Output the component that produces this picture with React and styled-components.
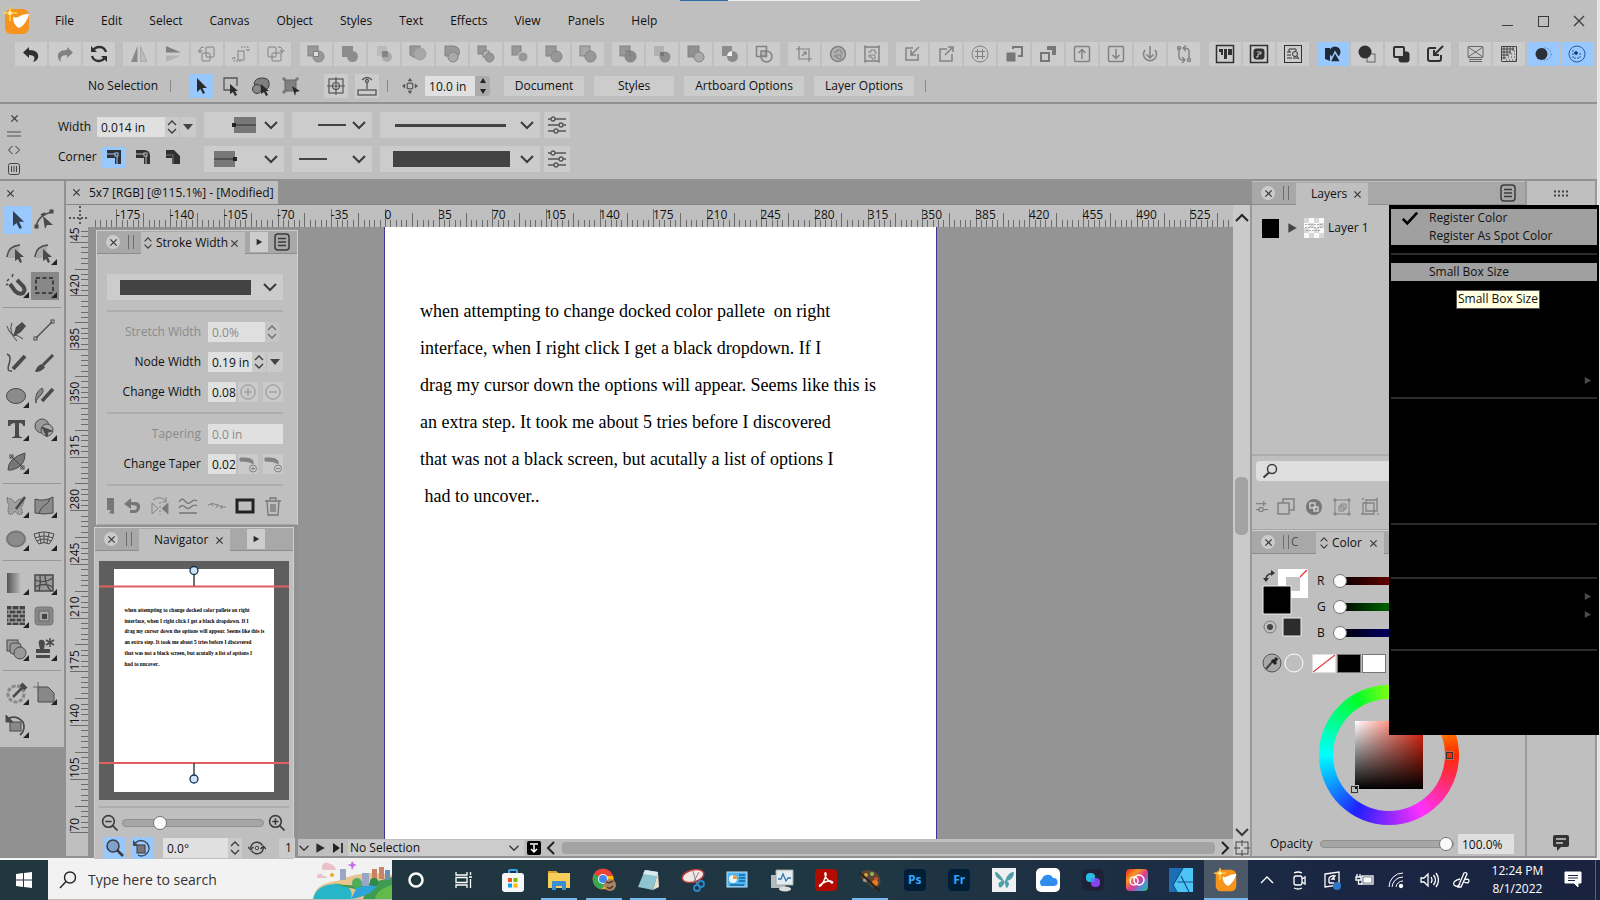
import React from 'react';
import styled, { createGlobalStyle, css } from 'styled-components';

const GlobalStyle = createGlobalStyle`
  * { box-sizing: border-box; }
  body {
    margin: 0;
    background: #bfbfbf;
    color: #111;
    font: 12px/16px "Open Sans", "Noto Sans", sans-serif;
    overflow: hidden;
  }
  button, input, select { font: inherit; color: inherit; border: 0; padding: 0; margin: 0; border-radius: 0; outline: 0; }
  button { background: none; cursor: pointer; white-space: nowrap; }
  svg { display: block; flex: none; overflow: hidden; }
`;

/* ---------- shared pieces ---------- */

const Svg = styled.svg.attrs({ fill: 'none', 'aria-hidden': true })`
  width: ${p => p.$w || 20}px;
  height: ${p => p.$h || p.$w || 20}px;
  stroke-width: ${p => p.$sw || 1};
`;

const Icon = ({ size = 20, box = 20, children, color = '#3b3b3b', sw }) => (
  <Svg $w={ size } $sw={ sw } viewBox={ `0 0 ${box} ${box}` } stroke={ color } color={ color }>{ children }</Svg>
);

const Close = () => <Icon size={ 9 } box={ 10 } sw={ 1.4 }><path d="M1.5 1.5l7 7M8.5 1.5l-7 7" /></Icon>;
const Chevron = ({ size = 16 }) => <Icon size={ size } box={ 16 } sw={ 2 }><path d="M2 5l6 6 6-6" /></Icon>;
const UpDown = ({ size = 14 }) => <Icon size={ size } box={ 14 } sw={ 1.3 }><path d="M3 5l4-4 4 4M3 9l4 4 4-4" /></Icon>;
const ListIcon = () => (
  <Icon size={ 18 } box={ 18 } sw={ 1.5 }>
    <rect x="2" y="1" width="14" height="16" rx="3" /><path d="M5 5.500h8M5 9h8M5 12.500h8" />
  </Icon>
);

const Window = styled.div`
  display: flex;
  flex-direction: column;
  flex: 1;
  min-height: 0;
  background: #bfbfbf;
  border-right: 3px solid #e6e6e6;
  border-bottom: 2px solid #f4f4f4;
`;

const Page = styled.div`
  display: flex;
  flex-direction: column;
  height: 100vh;
`;

/* ---------- menu bar ---------- */

const MenuBar = styled.header`
  display: flex;
  align-items: center;
  height: 42px;
  padding: 0 10px 0 3px;
  background: linear-gradient(90deg, #2d6ca8 48px, #efefef 48px) 680px 0 / 240px 1px no-repeat;
`;

const Menus = styled.nav`
  display: flex;
  flex: 1;
  gap: 27px;
  padding-left: 24px;
`;

const MenuButton = styled.button`
  height: 24px;
`;

const WindowButtons = styled.div`
  display: flex;
  gap: 20px;
`;

const Logo = ({ size = 28 }) => (
  <Svg $w={ size } viewBox="0 0 28 28">
    <rect x="2" y="2" width="24" height="25" rx="6" fill="#f7941e" />
    <path d="M10 10c6 2 8-4 16-3-1 5-5 12-10 14-4-2-6-6-6-11z" fill="#fff" />
    <path d="M7 0v14M0 6h14" stroke="#ffd34d" strokeWidth="1.5" />
    <circle cx="7" cy="6" r="2" fill="#fff2b0" />
  </Svg>
);

/* ---------- icon toolbar ---------- */

const Toolbar = styled.div`
  display: flex;
  justify-content: space-between;
  height: 24px;
  padding: 0 4px 0 15px;
`;

const ToolGroup = styled.div`
  display: flex;
  gap: 2px;
`;

const ToolbarButton = styled.button`
  display: flex;
  align-items: center;
  justify-content: center;
  width: 32px;
  height: 24px;
  background: ${p => p.$on ? '#99c8ff' : '#cccccc'};
`;

const G = '#828282';
const F = '#989898';
const D = '#303030';

const sq = (x, y, s, fill = F, extra) => <rect x={ x } y={ y } width={ s } height={ s } fill={ fill } { ...extra } />;
const ci = (x, y, r, fill = F, extra) => <circle cx={ x } cy={ y } r={ r } fill={ fill } { ...extra } />;

const toolbarGroups = [
  [
    <path d="M8 3v3c7 0 10 3 9 8-1 2-2 3-5 4 2-3 3-7-4-7v3L2 8.500z" fill={ D } stroke="none" />,
    <path d="M12 3v3c-7 0-10 3-9 8 1 2 2 3 3 4-1-4 0-7 6-7v3l6-5.500z" fill={ G } stroke="none" />,
    <><path d="M17 8a7 7 0 0 0-13-1M3 12a7 7 0 0 0 13 1" stroke={ D } strokeWidth="2.400" /><path d="M2 2v6h6zM18 18v-6h-6z" fill={ D } stroke="none" /></>
  ],
  [
    <g stroke={ G }><path d="M8.500 2v16H2z" fill="#888" stroke="none" /><path d="M11.500 2.500v15H18z" fill="#bbb" stroke="#aaa" /></g>,
    <g stroke={ G }><path d="M3 2v6.500h15z" fill="#808080" stroke="none" /><path d="M3 18v-6.500h15z" fill="#b4b4b4" stroke="none" /></g>,
    <g stroke={ G }><rect x="9" y="3" width="8" height="10" rx="1" /><rect x="5" y="9" width="8" height="8" rx="1" /><path d="M3 8V5q0-2 4-2M1 6l2 3 2-3" /></g>,
    <g stroke={ G }><rect x="7" y="7" width="6" height="9" /><path d="M10 3h7v4M3 13v4h7M15 5l2 2 2-2M1 15l2-2 2 2" strokeDasharray="2 1" /></g>,
    <g stroke={ G }><rect x="3" y="3" width="8" height="10" rx="1" /><rect x="7" y="9" width="9" height="8" rx="1" /><path d="M17 8V5q0-2-4-2M15 6l2 3 2-3" /></g>
  ],
  [
    <g stroke={ G }>{ sq(2, 2, 10) }{ ci(12.5, 12.5, 5.5, F) }<rect x="7.500" y="7.500" width="5" height="5" fill="#ddd" /></g>,
    <g stroke="none">{ sq(2, 2, 11, '#8c8c8c') }{ ci(12.5, 12.5, 5.5, '#8c8c8c') }</g>,
    <g stroke="none">{ sq(3, 2, 10, '#bababa') }{ ci(13, 13, 5, '#aaa') }{ sq(8, 7, 6, '#858585') }</g>,
    <g stroke={ G }><path d="M2 2h10v3L7 14 2 11z" fill={ F } />{ ci(12, 10, 6, '#a8a8a8', { stroke: '#a0a0a0' }) }</g>,
    <g stroke={ G }><path d="M3 2h9q7 1 5 9l-5 1H3z" fill={ F } />{ ci(11, 13, 5, '#aaa') }</g>,
    <g stroke={ G }>{ sq(2, 2, 8) }{ sq(7, 7, 6, '#b5b5b5') }{ ci(13.5, 13.5, 4.5) }</g>,
    <g stroke={ G }>{ sq(2, 2, 9) }{ ci(13, 13, 5, F, { stroke: '#ccc' }) }</g>,
    <g stroke={ G }>{ sq(2, 2, 10) }{ ci(12.5, 12.5, 5.5, F) }</g>,
    <g stroke={ G }>{ sq(2, 2, 10, '#a8a8a8') }{ ci(12.5, 12.5, 5.5, F) }</g>
  ],
  [
    <g stroke={ G }>{ sq(2, 2, 10) }{ ci(12.5, 12.5, 5.5, '#8a8a8a') }<path d="M7 7h5v5" stroke="#777" /></g>,
    <g stroke="none">{ sq(2, 2, 10, '#b2b2b2') }{ ci(13, 13, 5.5, '#8e8e8e') }{ sq(8, 8, 4, '#777') }</g>,
    <g stroke={ G }>{ sq(2, 2, 11, '#909090') }{ ci(13, 13, 5, '#aaa') }</g>,
    <g stroke="none">{ sq(2, 2, 10, '#8c8c8c') }{ ci(12.5, 12.5, 5.5, '#8c8c8c') }<path d="M7 12a6 6 0 0 1 5-5v5z" fill="#f2f2f2" /></g>,
    <g stroke={ G } strokeWidth="1.500">{ sq(2.5, 2.5, 10, 'none') }{ ci(12.5, 12.5, 5.5, 'none') }<path d="M7 7h5v5H7z" fill="#b4b4b4" /></g>
  ],
  [
    <g stroke={ G } strokeWidth="1.200"><path d="M5 2v13h13M2 5h13v13" /><path d="M8 12l4-4M12 11V8H9" /></g>,
    <g stroke={ G }><circle cx="10" cy="10" r="7.500" fill="#b0b0b0" strokeWidth="1.500" /><path d="M6 8h3v-2h4v3h2M7 13h3v2h3v-4H7z" /></g>,
    <g stroke={ G }><rect x="3" y="3" width="14" height="14" strokeWidth="1.500" /><path d="M6 8h3v-2h4v3h2M7 13h3v2h3v-4H7z" /><path d="M2 2h2v2M18 2h-2v2M2 18h2v-2M18 18h-2v-2" /></g>
  ],
  [
    <g stroke={ G } strokeWidth="1.500"><path d="M11 4H4v12h12v-6" /><path d="M17 3l-8 8M9 6v5h5" /></g>,
    <g stroke={ G } strokeWidth="1.500"><path d="M11 5H4v12h12v-7" /><path d="M9 11l8-8M12 3h5v5" /></g>,
    <g stroke={ G }><circle cx="10" cy="10" r="8" /><path d="M5 7.500h10M5 12.500h10M7.500 5v10M12.500 5v10" /></g>,
    <g stroke="#777">{ sq(3, 9, 8, '#777') }<path d="M9 5V3h9v9h-4" strokeWidth="2" /></g>,
    <g stroke="#777"><path d="M4 9h7v8H3V9z" strokeWidth="2" /><path d="M9 2h9v9h-4V6H9z" fill="#777" stroke="none" /></g>,
    <g stroke={ G } strokeWidth="1.500"><rect x="2.500" y="2.500" width="15" height="15" rx="1" /><path d="M10 15V6M6.500 9L10 5.500 13.500 9" /></g>,
    <g stroke={ G } strokeWidth="1.500"><rect x="2.500" y="2.500" width="15" height="15" rx="1" /><path d="M10 5v9M6.500 11l3.500 3.500 3.500-3.500" /></g>,
    <g stroke={ G } strokeWidth="1.500"><path d="M5 6a6.500 6.500 0 1 0 10 0M10 2v12M6.500 10.500L10 14l3.500-3.500" /></g>,
    <g stroke={ G } strokeWidth="1.400"><path d="M5 4v9q0 3 5 3M15 15V7q0-3-5-3M12 1.500L9 4l3 3M8 13l3 3-3 3" /><circle cx="5" cy="4" r="1.500" /><circle cx="15" cy="16" r="1.500" /></g>
  ],
  [
    <g stroke={ D }><rect x="1.500" y="1.500" width="17" height="17" strokeWidth="1.500" /><path d="M4 5h4v6H6V8H4zM9 5h3v10H9zM13 5h4v6h-4z" fill={ D } stroke="none" /></g>,
    <g stroke={ D }><rect x="1.500" y="1.500" width="17" height="17" strokeWidth="1.500" /><rect x="5" y="5" width="10" height="10" rx="2" fill={ D } /><path d="M8 8h4v2H9v3H7" stroke="#ccc" /></g>,
    <g stroke={ D }><rect x="1.500" y="1.500" width="17" height="17" /><path d="M6 5h7v2M4 8h4M4 11h4M4 14h5M6 5v3M10 14h5" /><circle cx="12" cy="10" r="2.500" /><path d="M14 12l2 3" /></g>
  ],
  [
    <g stroke="none" fill="#1f2a38"><path d="M2 4h5v13l-5-2z" /><circle cx="12" cy="8" r="5.500" /><path d="M12 8l6 10H7z" stroke="#99c8ff" strokeWidth="1.500" /></g>,
    <g stroke="#666"><rect x="10" y="10" width="8" height="8" /><circle cx="8" cy="8" r="6.500" fill={ D } stroke="none" /></g>,
    <g stroke={ D }><rect x="8" y="8" width="10" height="10" rx="2" fill={ D } /><rect x="3" y="3" width="10" height="10" rx="1" fill="#ccc" strokeWidth="2" /></g>,
    <g stroke={ D } strokeWidth="2"><path d="M11 4H5q-2 0-2 2v9q0 2 2 2h9q2 0 2-2v-4" /><path d="M18 2l-8 8M9 6v5h5" /></g>
  ],
  [
    <g stroke="#666"><rect x="3" y="2.500" width="15" height="11" rx="1" /><path d="M3 3l15 10M18 3L3 13M4 15.500h13M4 17.500h13" /></g>,
    <g stroke="#444"><path d="M2.500 17V2.500H17.500V17.500H2.500M5 2v13M8 2v10M11 2v8M14 2v5M2 5h13M2 8h10M2 11h8M2 14h5" /><path d="M9 13h9M7 16h11M12 10h6M15 7h3" strokeDasharray="1 2" /></g>,
    <g stroke="#4a78a8"><circle cx="12" cy="10" r="6" strokeDasharray="1.500 1.500" /><circle cx="8.500" cy="10" r="6" fill="#2a2f38" stroke="none" /></g>,
    <g stroke="#2c5c98"><circle cx="10" cy="10" r="8" /><path d="M6 6v8h7V8" strokeDasharray="2 1" /><circle cx="9" cy="9" r="1.500" fill="#124" /></g>
  ]
];

/* ---------- context bar ---------- */

const ContextBar = styled.div`
  display: flex;
  align-items: center;
  height: 38px;
  padding: 4px 0 0 88px;
  border-bottom: 2px solid #919191;
`;

const Tick = styled.i`
  width: 1px;
  height: 12px;
  margin: 0 ${p => p.$space}px;
  background: #888;
`;

const ModeSpacer = styled.i`
  width: ${p => p.$w}px;
`;

const ModeButton = styled.button`
  display: flex;
  align-items: center;
  justify-content: center;
  width: 24px;
  height: 24px;
  margin-right: ${p => p.$raised ? 7 : 6}px;
  background: ${p => p.$on ? '#99c8ff' : p.$raised ? '#cccccc' : 'none'};
`;

const NudgeIcon = styled.span`
  padding: 0 7px 0 13px;
`;

const PushButtons = styled.div`
  display: flex;
  padding-left: 14px;
`;

const Field = styled.input`
  width: ${p => p.$w}px;
  height: 20px;
  padding-left: 4px;
  background: #e0e0e0;
  color: ${p => p.disabled ? '#8a8a8a' : '#111'};
`;

const Stepper = styled.button`
  display: flex;
  align-items: center;
  justify-content: center;
  width: ${p => p.$w || 14}px;
  height: 20px;
  background: ${p => p.$dark ? '#ababab' : '#cacaca'};
  border-radius: ${p => p.$dark ? '0 3px 3px 0' : '0'};
  margin-left: ${p => p.$gap || 0}px;
  opacity: ${p => p.disabled ? 0.6 : 1};
`;

const PushButton = styled.button`
  height: 20px;
  min-width: ${p => p.$w}px;
  margin-right: 10px;
  background: #cccccc;
`;

/* ---------- stroke bar ---------- */

const StrokeBar = styled.section`
  display: flex;
  height: 77px;
  padding: 8px 0 0 7px;
  border-bottom: 2px solid #919191;
`;

const Grip = styled.div`
  display: flex;
  flex-direction: column;
  align-items: center;
  gap: 8px;
  width: 14px;
  padding-top: 2px;
  margin-right: 37px;
`;

const StrokeColumn = styled.div`
  display: flex;
  flex-direction: column;
  gap: 8px;
  margin-right: 8px;
`;

const StrokeFields = styled(StrokeColumn)`
  gap: 4px;
  padding-top: 2px;
`;

const StrokeRow = styled.div`
  display: flex;
  align-items: center;
  height: 26px;
`;

const StrokeLabel = styled.label`
  width: 39px;
`;

const CornerLabel = styled.span`
  width: 43px;
`;

const ComboBox = styled.div`
  display: grid;
  align-items: center;
  width: ${p => p.$w}px;
  height: 26px;
  background: #cccccc;
  > * { grid-area: 1 / 1; }
`;

const ComboSelect = styled.select`
  appearance: none;
  width: 100%;
  height: 100%;
  background: none;
`;

const ComboFace = styled.span`
  display: flex;
  align-items: center;
  justify-content: space-between;
  padding: 0 5px 0 ${p => p.$pad}px;
  pointer-events: none;
`;

const Combo = ({ width, pad, label, children }) => (
  <ComboBox $w={ width }>
    <ComboSelect aria-label={ label }><option /></ComboSelect>
    <ComboFace $pad={ pad }>{ children }<Chevron /></ComboFace>
  </ComboBox>
);

const Bar = styled.i`
  width: ${p => p.$w}px;
  height: ${p => p.$h}px;
  background: #434343;
`;

const Sliders = () => (
  <Icon sw={ 1.3 } color="#555"><path d="M1 4h18M1 10h18M1 16h18" />
    <g fill="#ccc"><circle cx="6" cy="4" r="2" /><circle cx="14" cy="10" r="2" /><circle cx="9" cy="16" r="2" /></g>
  </Icon>
);

const SquareButton = styled.button`
  display: flex;
  align-items: center;
  justify-content: center;
  width: ${p => p.$w || 26}px;
  height: ${p => p.$h || 26}px;
  background: ${p => p.$on ? '#99c8ff' : p.$flat ? 'none' : '#cccccc'};
  margin-left: ${p => p.$gap || 0}px;
`;

/* ---------- workspace ---------- */

const Workspace = styled.main`
  position: relative;
  display: flex;
  flex: 1;
  min-height: 0;
  background: #919191;
  border-bottom: 2px solid #919191;
`;

const Toolbox = styled.aside`
  align-self: flex-start;
  width: 64px;
  padding: 8px 3px 0;
  margin-right: 2px;
  background: #bfbfbf;
`;

const ToolboxClose = styled.button`
  display: flex;
  padding: 0 3px;
`;

const ToolGrid = styled.div`
  display: grid;
  grid-template-columns: 28px 28px;
  gap: 5px 0;
  padding: 8px 0 7px;
  border-bottom: ${p => p.$last ? 0 : 1}px solid #999;
`;

const ToolCell = styled.button`
  display: flex;
  align-items: center;
  justify-content: center;
  height: 28px;
  background: ${p => p.$on ? '#99c8ff' : p.$held ? '#888888' : 'none'};
`;

const T = '#4a4a4a';
const M = '#8b8b8b';
const corner = <path d="M25 19v6h-6z" fill="#222" stroke="none" />;

const arcPointer = (
  <>
    <path d="M3 18Q4 5 16 5l-3 13z" fill="#aaa" stroke="none" />
    <path d="M3 17Q4 6 16 5" strokeWidth="1.500" />
    <path d="M11 9v12l3-2 2 4 2-1-2-5h4z" fill={ T } stroke="none" />
  </>
);

const toolGroups = [
  [
    { on: true, icon: <path d="M9 4v15l3.500-3 3 6 2.500-1.200-3-6h5z" fill="#33414f" stroke="none" /> },
    { icon: <><path d="M4 20Q6 8 20 5M9 8l4-2" strokeWidth="1.500" /><path d="M11 9l10 9-6 0-2 4z" fill={ T } stroke="none" /><rect x="3" y="18" width="3" height="3" fill={ T } /><rect x="18" y="3" width="3" height="3" fill={ T } /></> },
    { icon: arcPointer },
    { icon: <>{ arcPointer }{ corner }</> },
    { icon: <><path d="M6 11l5 7q4 4 8 2 3-3 0-7l-6-6" strokeWidth="4" /><path d="M3 8l2-2M8 4l1-3M2 12l2-1" strokeWidth="1.500" />{ corner }</> },
    { held: true, icon: <><rect x="4" y="5" width="17" height="15" strokeDasharray="4 2.500" strokeWidth="2" stroke="#3f3f3f" />{ corner }</> }
  ],
  [
    { icon: <><path d="M9 20l3-10 6-5 4 4-5 6z" fill={ T } stroke="none" /><path d="M3 9q3 9 7 9t9 4M8 6q-4 9 5 18M12 17l5-6" /></> },
    { icon: <><path d="M4 21L20 5" strokeWidth="1.300" /><rect x="2" y="20" width="3" height="3" /><rect x="19" y="3" width="3" height="3" /></> },
    { icon: <><path d="M9 19L21 6" strokeWidth="4" /><path d="M3 4q5 2 2 10t3 7" strokeWidth="1.500" /></> },
    { icon: <><path d="M11 15L21 5" strokeWidth="3" /><path d="M3 22q2-7 7-8l3 3q-3 5-10 5z" fill={ T } stroke="none" /></> },
    { icon: <><ellipse cx="12" cy="13" rx="9.500" ry="7.500" fill={ M } />{ corner }</> },
    { icon: <><path d="M10 18L21 6" strokeWidth="3.500" /><path d="M4 20Q2 10 10 5q3 3-2 8t-4 7z" fill="#888" /></> },
    { icon: <><path d="M4 4h17v6h-2q0-3-4-3v12q0 2 3 2v1H8v-1q3 0 3-2V7Q7 7 6 10H4z" fill={ T } stroke="none" />{ corner }</> },
    { icon: <><circle cx="10" cy="10" r="7" fill="#999" /><circle cx="15" cy="14" r="6" fill="#aaa" /><path d="M10 11l10 4-4 1-1 5z" fill={ T } />{ corner }</> },
    { icon: <><path d="M4 21Q4 9 21 4q1 13-13 17z" fill="#777" /><path d="M7 7l12 12" /><rect x="6" y="6" width="3" height="3" /><rect x="17" y="17" width="3" height="3" />{ corner }</> }
  ],
  [
    { icon: <><path d="M3 5q5 0 8 5 3-5 9-4 0 6-3 8 2 4 1 7-4 2-7-3-3 5-6 3-2-3 0-8-2-4-2-8z" fill="#a0a0a0" strokeDasharray="1 1" /><path d="M12 16L21 4" strokeWidth="2.500" />{ corner }</> },
    { icon: <><path d="M3 6q9 3 18-2v16q-8 2-18 0z" fill={ M } /><path d="M7 20q2-6 6-8t5-7" />{ corner }</> },
    { icon: <><ellipse cx="12" cy="13" rx="9" ry="7.500" fill={ M } stroke="#777" strokeWidth="2" />{ corner }</> },
    { icon: <><path d="M2 8q10-4 20 0-1 6-5 10-5-3-10 0Q3 14 2 8zM3 12q9-4 18 0M5 15q7-4 14 0M12 6v11M7 7l2 10M17 7l-2 10" />{ corner }</> }
  ],
  [
    { icon: <><defs><linearGradient id="grad"><stop stopColor="#555" /><stop offset="1" stopColor="#b5b5b5" /></linearGradient></defs><rect x="3" y="3" width="13" height="20" fill="url(#grad)" stroke="none" />{ corner }</> },
    { icon: <><rect x="3" y="5" width="18" height="16" fill="#999" strokeWidth="1.500" /><path d="M3 10q9 4 18-2M3 17q9-5 18 0M8 5q1 8-1 16M13 5q0 10 6 16" strokeWidth="1.300" />{ corner }</> },
    { icon: <><rect x="3" y="3" width="18" height="19" fill="#444" stroke="none" /><path d="M3 7h18M3 11h18M3 15h18M3 19h18M8 3v4M15 3v4M5 7v4M12 7v4M18 7v4M8 11v4M15 11v4M5 15v4M12 15v4M18 15v4M8 19v3M15 19v3" stroke="#bbb" />{ corner }</> },
    { icon: <><rect x="3" y="4" width="18" height="18" rx="3" fill="#888" stroke="#777" /><rect x="7" y="8" width="10" height="10" fill="#a5a5a5" stroke="#666" /><rect x="10" y="11" width="5" height="5" fill="#444" stroke="none" /></> },
    { icon: <><rect x="3" y="4" width="11" height="11" fill="#999" /><rect x="6" y="7" width="11" height="11" rx="3" fill="#999" /><circle cx="16" cy="17" r="6" fill="#999" />{ corner }</> },
    { icon: <><path d="M8 4q4-1 5 3l-1 6h6v4H4v-4h4L7 9q-1-4 1-5zM4 19h14v3H4z" fill={ T } stroke="none" /><path d="M18 2v9M14 4l8 5M22 4l-8 5" strokeWidth="1.500" />{ corner }</> }
  ],
  [
    { icon: <><circle cx="12" cy="14" r="8" strokeWidth="3" stroke="#888" strokeDasharray="4 1.500" /><path d="M9 17L19 7" strokeWidth="2.500" /><path d="M17 4l5 5" strokeWidth="4" />{ corner }</> },
    { icon: <><path d="M6 7h10l6 6v9H6z" fill="#888" /><path d="M1 7h8M6 2v8" stroke="#666" />{ corner }</> },
    { icon: <><rect x="6" y="9" width="11" height="9" fill="#888" /><path d="M3 6q9-5 16 3 3 8-3 13" strokeWidth="1.700" /><path d="M2 2v7h7z" fill={ T } />{ corner }</> }
  ]
];

const DocumentArea = styled.section`
  display: flex;
  flex-direction: column;
  flex: 1;
  min-width: 0;
`;

const DocumentTabs = styled.div`
  display: flex;
  height: 24px;
  border-bottom: 1px solid #858585;
`;

const DocumentTab = styled.button`
  display: flex;
  align-items: center;
  gap: 8px;
  height: 23px;
  padding: 0 4px 0 6px;
  background: #bfbfbf;
`;

const RulerRow = styled.div`
  display: flex;
  height: 22px;
  background: #bfbfbf;
`;

const TopRuler = styled.svg`
  flex: 1;
  min-width: 0;
  height: 22px;
  font-size: 12px;
`;

const SideRuler = styled.svg`
  width: 22px;
  height: 100%;
  background: #bfbfbf;
  font-size: 12px;
`;

const DocumentBody = styled.div`
  display: flex;
  flex: 1;
  min-height: 0;
`;

const DocumentMain = styled.div`
  display: flex;
  flex-direction: column;
  flex: 1;
  min-width: 0;
`;

const PanelColumn = styled.div`
  display: flex;
  flex-direction: column;
  gap: 2px;
  width: 210px;
  padding: 3px 0 0 6px;
`;

const CanvasColumn = styled.div`
  display: flex;
  flex-direction: column;
  flex: 1;
  min-width: 0;
`;

const Canvas = styled.div`
  flex: 1;
  min-height: 0;
  padding-left: 86px;
  background: #949494;
`;

const Artboard = styled.article`
  width: 553px;
  height: 100%;
  padding: 66px 0 0 35px;
  background: #fff;
  border-left: 1px solid #3b3796;
  border-right: 1px solid #3b3796;
  font: 18px/37px "Liberation Serif", serif;
  color: #000;
  white-space: pre;
`;

const Line = styled.p`
  margin: 0;
`;

const lines = [
  'when attempting to change docked color pallete  on right',
  'interface, when I right click I get a black dropdown. If I',
  'drag my cursor down the options will appear. Seems like this is',
  'an extra step. It took me about 5 tries before I discovered',
  'that was not a black screen, but acutally a list of options I',
  ' had to uncover..'
];

const StatusBar = styled.footer`
  display: flex;
  align-items: center;
  gap: 2px;
  height: 17px;
  background: #bfbfbf;
`;

const StatusSelect = styled.select`
  appearance: none;
  flex: 1;
  height: 16px;
  padding-left: 2px;
  background: none;
`;

const StatusCombo = styled.div`
  display: flex;
  align-items: center;
  width: 176px;
  padding-right: 4px;
  background: #cccccc;
`;

const StatusButton = styled.button`
  display: flex;
  justify-content: center;
  width: 16px;
`;

const HorizontalThumb = styled.i`
  flex: 1;
  height: 12px;
  border-radius: 4px;
  background: #a3a3a3;
`;

const ScrollColumn = styled.div`
  display: flex;
  flex-direction: column;
  align-items: center;
  width: 19px;
  padding: 5px 0 0;
  background: #cacaca;
  border-right: 2px solid #999;
`;

const VerticalTrack = styled.div`
  flex: 1;
  padding-top: 251px;
`;

const VerticalThumb = styled.i`
  display: block;
  width: 13px;
  height: 58px;
  border-radius: 5px;
  background: #a3a3a3;
`;

/* ---------- docked panels ---------- */

const Spacer = styled.i`
  flex: 1;
`;

const Panel = styled.section`
  display: flex;
  flex-direction: column;
  background: #bfbfbf;
  margin-left: ${p => p.$inset || 0}px;
  margin-right: ${p => p.$end || 0}px;
  border: solid #cfcfcf;
  border-width: 1px 1px 0 1px;
`;

const PanelTabs = styled.header`
  display: flex;
  align-items: center;
  height: 23px;
  padding: 0 ${p => p.$end || 0}px 0 9px;
  background: #a8a8a8;
  border-bottom: 1px solid #8e8e8e;
`;

const PanelClose = styled.button`
  display: flex;
  align-items: center;
  justify-content: center;
  width: 14px;
  height: 14px;
  border-radius: 7px;
  background: #cbcbcb;
`;

const PanelGrip = styled.i`
  width: 6px;
  height: 14px;
  margin: 0 7px 0 8px;
  border: solid #6c6c6c;
  border-width: 0 1px;
`;

const ColorGrip = styled(PanelGrip)`
  margin-right: 2px;
`;

const PanelTab = styled.button`
  display: flex;
  align-items: center;
  align-self: stretch;
  gap: 2px;
  margin: 1px 0 -1px;
  width: ${p => p.$w}px;
  padding: 0 6px 0 ${p => p.$pad || 2}px;
  background: #bfbfbf;
  svg:last-child { margin-left: auto; }
`;

const HiddenTab = styled.span`
  width: 25px;
  color: #555;
`;

const NextTab = styled.button`
  display: flex;
  align-items: center;
  justify-content: center;
  width: 18px;
  height: 20px;
  background: #cdcdcd;
`;

const Arrow = ({ color = '#2b2b2b', size = 10 }) => (
  <Icon size={ size } box={ 10 }><path d="M2 1l7 4-7 4z" fill={ color } stroke="none" /></Icon>
);

const Down = () => <Icon size={ 10 } box={ 10 }><path d="M0 2h10L5 8z" fill="#444" stroke="none" /></Icon>;

const PanelBody = styled.div`
  display: flex;
  flex-direction: column;
  gap: ${p => p.$gap || 0}px;
  padding: ${p => p.$pad};
`;

const Rule = styled.hr`
  width: 100%;
  height: 2px;
  margin: 0;
  border: 0;
  background: #acacac;
`;

const FormRow = styled.div`
  display: flex;
  align-items: center;
  height: 20px;
  label {
    width: 94px;
    margin-right: 7px;
    text-align: right;
    color: ${p => p.$off ? '#8a8a8a' : '#111'};
  }
`;

const IconRow = styled.div`
  display: flex;
  align-items: center;
  justify-content: space-between;
`;

const Foot = styled.i`
  height: 9px;
  border-bottom: 1px solid #a5a5a5;
`;

const Preview = styled.div`
  height: 239px;
  background: #5e5e5e;
`;

const Range = styled.input.attrs({ type: 'range' })`
  appearance: none;
  flex: 1;
  min-width: 0;
  height: 14px;
  background: none;
  &::-webkit-slider-runnable-track {
    height: 8px;
    border-radius: ${p => p.$tint ? 0 : 4}px;
    border: ${p => p.$tint ? '0' : '1px solid #8f8f8f'};
    background: ${p => p.$tint ? `linear-gradient(90deg, transparent 5px, #000 5px, ${p.$tint} 75%)` : '#a6a6a6'};
  }
  &::-webkit-slider-thumb {
    appearance: none;
    width: 14px;
    height: 14px;
    margin-top: ${p => p.$tint ? -3 : -4}px;
    border: 1px solid #777;
    border-radius: 7px;
    background: #fafafa;
  }
`;

const ZoomRange = styled(Range)`
  margin: 0 4px;
`;

const ZoomRow = styled(IconRow)`
  padding: 0 4px 0 2px;
`;

const NavFooter = styled.div`
  display: flex;
  align-items: center;
  height: 22px;
  margin-right: -6px;
`;

const AngleField = styled(Field)`
  margin-left: 10px;
`;

const PageNumber = styled.span`
  width: 16px;
  height: 20px;
  margin-left: auto;
  padding: 2px 0 0 6px;
  background: #cacaca;
`;

const Dock = styled.aside`
  display: flex;
  flex-direction: column;
  width: 275px;
  padding-top: 1px;
  background: #bfbfbf;
  border-right: 2px solid #999;
`;

const LayerList = styled.div`
  flex: 1;
  min-height: 0;
  padding: 13px 10px;
`;

const LayerRow = styled.div`
  display: flex;
  align-items: center;
  height: 20px;
`;

const LayerName = styled.span`
  display: flex;
  align-items: center;
  gap: 4px;
  padding-left: 6px;
`;

const Swatch = styled.button`
  width: ${p => p.$w}px;
  height: ${p => p.$h}px;
  border: ${p => p.$border || '0'};
  background: ${p => p.$fill};
  margin-right: ${p => p.$gap || 0}px;
`;

const Search = styled.label`
  display: flex;
  align-items: center;
  height: 20px;
  margin: 5px 4px 0;
  padding-left: 6px;
  border-radius: 4px;
  background: #dedede;
  input { flex: 1; background: none; }
`;

const LayerActions = styled.div`
  display: flex;
  align-items: center;
  gap: 8px;
  height: 48px;
  padding: 4px 0 0 4px;
`;

const Divider = styled.i`
  height: 2px;
  background: #cfcfcf;
  border-top: 1px solid #a5a5a5;
`;

const ColorMixer = styled.div`
  display: flex;
  gap: 9px;
  padding: 15px 10px 0;
`;

const Channels = styled.div`
  display: flex;
  flex-direction: column;
  flex: 1;
  gap: 6px;
  padding-top: 2px;
`;

const Channel = styled.label`
  display: flex;
  align-items: center;
  height: 20px;
  span { width: 16px; }
`;

const SwatchRow = styled.div`
  display: flex;
  align-items: center;
  padding: 10px 10px 12px;
`;

const Wheel = styled.div`
  position: relative;
  display: flex;
  align-items: center;
  justify-content: center;
  align-self: center;
  width: 140px;
  height: 140px;
  border-radius: 70px;
  background: conic-gradient(from 90deg, #ff2a00, #ff30ff, #1f20ff, #00ffff, #00ff2a, #ffff00, #ff2a00);
`;

const WheelHole = styled.div`
  display: flex;
  align-items: center;
  justify-content: center;
  width: 112px;
  height: 112px;
  border-radius: 56px;
  background: #bfbfbf;
`;

const Shade = styled.div`
  width: 68px;
  height: 68px;
  background: linear-gradient(0deg, #000, transparent), linear-gradient(90deg, #fff, #ff2a12);
`;

const Marker = styled.i`
  position: absolute;
  left: ${p => p.$x}px;
  top: ${p => p.$y}px;
  width: 7px;
  height: 7px;
  border: 1px solid #333;
  outline: 1px solid ${p => p.$light ? '#bbb' : '#b0705a'};
`;

const OpacityRow = styled.div`
  display: flex;
  align-items: center;
  height: 20px;
  margin: 9px 11px 2px 18px;
  label { width: 50px; }
`;

const OpacityField = styled(Field)`
  margin-left: 4px;
`;

const SideStrip = styled.aside`
  display: flex;
  flex-direction: column;
  align-items: center;
  justify-content: space-between;
  width: 70px;
  padding: 9px 0 4px;
  background: #bfbfbf;
  border-right: 2px solid #999;
`;

/* ---------- drop-down over the docks ---------- */

const Popup = styled.div`
  position: absolute;
  z-index: 2;
  top: 24px;
  right: -2px;
  width: 210px;
  padding: 4px 2px;
  background: #000;
`;

const PopupItem = styled.button`
  display: flex;
  align-items: center;
  width: 100%;
  height: 18px;
  padding-right: 5px;
  text-align: left;
  background: ${p => p.$shown ? '#a0a0a0' : '#000'};
`;

const PopupMark = styled.span`
  display: flex;
  justify-content: center;
  width: 38px;
`;

const PopupLabel = styled.span`
  flex: 1;
`;

const PopupRule = styled.hr`
  height: 2px;
  margin: 8px 0;
  border: 0;
  background: #2c2c2c;
`;

const Tooltip = styled.div`
  position: absolute;
  top: 85px;
  left: 67px;
  height: 19px;
  padding: 0 1px;
  border: 1px solid #555;
  background: #ffffe1;
  white-space: nowrap;
`;

const popupRows = [
  { label: 'Register Color', checked: true }, { label: 'Register As Spot Color' }, 'rule',
  { label: 'Small Box Size' }, {}, {}, {}, {}, {}, { sub: true }, 'rule',
  {}, {}, {}, {}, {}, {}, 'rule',
  {}, {}, 'rule',
  { sub: true }, { sub: true }, {}, 'rule',
  {}, {}, {}, {}
];

/* ---------- taskbar ---------- */

const Taskbar = styled.footer`
  display: flex;
  align-items: center;
  height: 40px;
  background: linear-gradient(90deg, #20373f, #1f3643 55%, #1a2643 85%, #19233f);
  color: #fff;
`;

const Start = styled.button`
  display: flex;
  justify-content: center;
  width: 48px;
`;

const SearchBox = styled.label`
  display: flex;
  align-items: center;
  width: 344px;
  height: 40px;
  padding-left: 11px;
  background: #f2f2f2;
  border-bottom: 1px solid #bbb;
  input {
    flex: 1;
    min-width: 0;
    margin-left: 11px;
    background: none;
    font-size: 14px;
    color: #333;
  }
  input::placeholder { color: #333; opacity: 1; }
`;

const AppButton = styled.button`
  display: flex;
  align-items: center;
  justify-content: center;
  width: ${p => p.$wide ? 48 : 44}px;
  height: 40px;
  background: ${p => p.$active ? '#4b5867' : 'none'};
  ${p => p.$open && css`
    background: linear-gradient(#76b9ed, #76b9ed) center bottom / ${p.$active ? '100%' : '36px'} 2px no-repeat ${p.$active ? '#4b5867' : ''};
  `}
`;

const Tile = styled.span`
  width: 22px;
  height: 22px;
  border-radius: 4px;
  background: #001e36;
  color: #31a8ff;
  font-weight: 700;
  line-height: 22px;
`;

const Apps = styled.div`
  display: flex;
  flex: 0 1 856px;
  justify-content: space-between;
`;

const Tray = styled.div`
  display: flex;
  align-items: center;
  justify-content: space-between;
  flex: 1;
  padding: 0 4px 0 9px;
`;

const Clock = styled.time`
  padding: 0 7px 0 8px;
  text-align: center;
  line-height: 18px;
`;

const ShowDesktop = styled.i`
  width: 1px;
  height: 40px;
  background: #59647a;
`;

const apps = [
  { name: 'Cortana', wide: true, icon: <circle cx="12" cy="12" r="6.500" stroke="#fff" strokeWidth="2.500" /> },
  { name: 'Task View', wide: true, icon: <path d="M4 4v3h11V4M4 20v-3h11v3M4 9.500h11v5H4zM18.500 4v3M18.500 11v9M17 9h3" stroke="#fff" strokeWidth="1.300" /> },
  { name: 'Store', wide: true, icon: <><path d="M8 6V3q0-1 1-1h6q1 0 1 1v3" stroke="#35a7e8" strokeWidth="2" /><rect x="1" y="5" width="22" height="19" rx="3" fill="#f6f6f6" /><path d="M7 10h4v4H7z" fill="#f25022" /><path d="M12.500 10h4v4h-4z" fill="#7fba00" /><path d="M7 15.500h4v4H7z" fill="#00a4ef" /><path d="M12.500 15.500h4v4h-4z" fill="#ffb900" /></> },
  { name: 'Explorer', open: true, icon: <><path d="M1 3h8l2 2h12v15H1z" fill="#f7ce5b" /><path d="M1 3h8l1 2H1z" fill="#d9a02c" /><path d="M5 22v-8q0-1 1-1h12q1 0 1 1v8h-4v-4H9v4z" fill="#3a8fd0" /></> },
  { name: 'Chrome', open: true, icon: <><circle cx="11" cy="11" r="10.500" fill="#ea4335" /><path d="M2 6A10.500 10.500 0 0 0 10 21.500l5-8.500z" fill="#34a853" /><path d="M21 8a10 10 0 0 1-11 13l6-9-1-4z" fill="#fbbc05" /><circle cx="11" cy="11" r="5" fill="#fff" /><circle cx="11" cy="11" r="4" fill="#4285f4" /><circle cx="18" cy="17" r="6" fill="#a98467" /><path d="M14 14l3 1 4-2M15 19q3 3 6-1" stroke="#5d3a26" strokeWidth="1.500" /></> },
  { name: 'Notepad', open: true, icon: <><path d="M9 2l13 2-5 18L2 19z" fill="#8fc5cf" /><path d="M9 2l13 2-1 4L7 6z" fill="#d8ecef" /><path d="M22 4l1 15-6 3z" fill="#e8e0cc" /></> },
  { name: 'Snip', icon: <><ellipse cx="12" cy="8" rx="11" ry="6" fill="#f2e8e8" stroke="#c23b3b" strokeWidth="1.500" transform="rotate(-15 12 8)" /><path d="M12 3l4 14M18 4L12 15" stroke="#888" strokeWidth="1" /><circle cx="16" cy="20" r="3" stroke="#2c86c8" strokeWidth="1.800" /><circle cx="20" cy="16" r="3" stroke="#2c86c8" strokeWidth="1.800" /></> },
  { name: 'Control Panel', icon: <><rect x="2" y="4" width="20" height="15" fill="#4fb4ef" stroke="#bfe4fa" /><circle cx="8" cy="11" r="4" fill="#e8f6ff" /><path d="M8 11V7a4 4 0 0 1 4 4z" fill="#f59a2e" /><path d="M14 7h6M14 10h6M14 13h6M5 17h14" stroke="#14659f" strokeWidth="1.500" /></> },
  { name: 'Monitor', icon: <><path d="M1 7h14v13H1z" fill="#b6bbbf" /><path d="M6 2h17v15H6z" fill="#e6ebee" stroke="#9aa" /><path d="M8 11h3l2-5 3 7 2-3h3" stroke="#2b7ab5" strokeWidth="1.300" /><ellipse cx="15" cy="21" rx="6" ry="2.500" fill="#ddd" /></> },
  { name: 'Acrobat', icon: <><rect x="1" y="1" width="22" height="22" rx="4" fill="#b30b00" /><path d="M6 18q3-1 6-11 0-3-1-2-1 5 7 10 2-1-2-2-5 0-10 4-1 2 0 1z" stroke="#fff" strokeWidth="1.500" /></> },
  { name: 'Paint', open: true, icon: <><path d="M3 4q9-5 17 2 5 8 0 13-7 2-9-3-10-2-8-12z" fill="#5b4631" /><circle cx="8" cy="7" r="2" fill="#d8a03a" /><circle cx="14" cy="6" r="2" fill="#97b457" /><circle cx="18" cy="11" r="2" fill="#d94d2a" /><circle cx="17" cy="15" r="3" fill="#ef7d1f" /><circle cx="7" cy="12" r="2" fill="#9a9a9a" /><path d="M2 5l20 18" stroke="#26231f" strokeWidth="2" /></> },
  { name: 'Photoshop', tile: 'Ps' },
  { name: 'Fresco', tile: 'Fr' },
  { name: 'Butterfly', icon: <><rect width="24" height="24" fill="#eef0f1" /><path d="M12 13Q6 3 3 4q0 6 7 9-5 1-3 6 3 2 6-5zM13 13q3-9 9-9 0 7-7 9 4 2 0 7-2 0-2-7z" fill="#4f9fa8" /></> },
  { name: 'iCloud', icon: <><rect width="24" height="24" rx="5" fill="#fff" /><path d="M6 18a4 4 0 0 1 0-7 6 6 0 0 1 11-1 4 4 0 0 1 1 8z" fill="#2f8df0" /></> },
  { name: 'Clip', icon: <><rect x="1" y="1" width="22" height="22" rx="5" fill="#1d2236" /><rect x="5" y="5" width="9" height="9" rx="4" fill="#27bce8" /><rect x="10" y="10" width="9" height="9" rx="4" fill="#8b3ff0" /><path d="M10 10h4v4h-4z" fill="#5c7bf5" /></> },
  { name: 'Creative Cloud', icon: <><defs><linearGradient id="cc" x2="1" y2="1"><stop stopColor="#e91e28" /><stop offset=".3" stopColor="#f8961e" /><stop offset=".55" stopColor="#e0359a" /><stop offset=".8" stopColor="#3f9bd5" /><stop offset="1" stopColor="#3fb54a" /></linearGradient></defs><rect x="1" y="1" width="22" height="22" rx="4" fill="url(#cc)" /><circle cx="9" cy="13" r="4" stroke="#fff" strokeWidth="1.500" /><circle cx="14" cy="12" r="5" stroke="#fff" strokeWidth="1.500" /></> },
  { name: 'Affinity', icon: <><rect width="24" height="24" fill="#4cc4f5" /><path d="M0 0h14L4 17l4 7H0z" fill="#1c6fb4" /><path d="M14 0L4 17l4 7M8 14h16M12 8l8 16" stroke="#12538c" strokeWidth="1.200" /></> },
  { name: 'VectorStyler', open: true, active: true, logo: true }
];

const trayIcons = [
  <path d="M4 13l6-6 6 6" />,
  <><rect x="5" y="6" width="8" height="9" rx="2" /><path d="M13 9l3-2v7l-3-2M5 3q4-2 8 0M5 18q4 2 8 0" /></>,
  <><path d="M3 4l14-2v13l-14 2zM7 13V8q2-3 6-2l-3 3h3M7 13h5" /><circle cx="15" cy="16" r="4" fill="#2d78c8" stroke="none" /></>,
  <><rect x="8" y="6" width="11" height="8" /><path d="M10 8h7v4h-7z" fill="#fff" /><path d="M3 4v3M6 4v3M2 7h5v3H2zM4.500 10v4H8" /></>,
  <><path d="M3 17A14 14 0 0 1 17 3M6 17A11 11 0 0 1 17 7M10 17a7 7 0 0 1 7-6" strokeWidth="1" /><circle cx="15" cy="16" r="1.500" fill="#fff" /></>,
  <path d="M2 8v4h3l4 4V4L5 8zM12 7q2 3 0 6M14.500 5q4 5 0 10M17 3q5 7 0 14" />,
  <path d="M7 17L13 3q3-1 3 1l-6 13zM9 9q-8 2-6 6 3 3 6-1M13 10q5-2 5 1t-5 1" />
];

/* ---------- rulers ---------- */

const STEP = 53.7;

const ticksUntil = (start, count) => Array.from({ length: count }, (_, i) => start + i * STEP / 10);

const RulerX = () => (
  <TopRuler aria-hidden="true">
    <path d={ ticksUntil(7, 227).map((x, i) => {
      const k = (i - 4 + 10) % 10;
      const top = k === 0 ? 4 : k === 5 ? 8 : 15;
      return `M${Math.round(x) + 0.5} ${top}V22`;
    }).join('') } stroke="#6b6b6b" />
    { Array.from({ length: 21 }, (_, i) => (
      <text key={ i } x={ 28 + i * STEP } y="14" fill="#111">{ (i - 5) * 35 }</text>
    )) }
  </TopRuler>
);

const RulerY = () => (
  <SideRuler aria-hidden="true">
    <path d={ ticksUntil(4, 113).map((y, i) => {
      const k = (i + 8) % 10;
      const left = k === 0 ? 4 : k === 5 ? 9 : 15;
      return `M${left} ${Math.round(y) + 0.5}H22`;
    }).join('') } stroke="#6b6b6b" />
    { Array.from({ length: 12 }, (_, i) => (
      <text key={ i } transform={ `translate(13 ${14 + i * STEP}) rotate(-90)` } fill="#111">{ 455 - i * 35 }</text>
    )) }
  </SideRuler>
);

/* ---------- panels ---------- */

const Taper = ({ d }) => (
  <Icon size={ 18 } box={ 18 } color={ G }><path d="M1 3h5q6 0 8 3v3q-3-3-13-3z" fill={ G } /><circle cx="14" cy="13.500" r="3.500" /><path d={ d } /></Icon>
);

const StrokeWidthPanel = () => (
  <Panel $inset={ 2 }>
    <PanelTabs $end={ 6 }>
      <PanelClose aria-label="Close panel"><Close /></PanelClose><PanelGrip />
      <PanelTab $w={ 104 } $pad={ 1 }><UpDown size={ 12 } />Stroke Width<Close /></PanelTab>
      <Spacer />
      <NextTab aria-label="Next tab"><Arrow size={ 8 } /></NextTab>
      <Spacer />
      <ListIcon />
    </PanelTabs>
    <PanelBody $pad="20px 14px 0 10px" $gap={ 10 }>
      <Combo width={ 176 } pad={ 13 } label="Profile"><Bar $w={ 131 } $h={ 15 } /></Combo>
      <Rule />
      <FormRow $off>
        <label htmlFor="stretch">Stretch Width</label><Field id="stretch" $w={ 57 } defaultValue="0.0%" disabled />
        <Stepper disabled aria-label="Step stretch"><UpDown /></Stepper>
      </FormRow>
      <FormRow>
        <label htmlFor="node">Node Width</label><Field id="node" $w={ 44 } defaultValue="0.19 in" />
        <Stepper aria-label="Step node"><UpDown /></Stepper>
        <Stepper $w={ 16 } $gap={ 1 } aria-label="Node presets"><Down /></Stepper>
      </FormRow>
      <FormRow>
        <label htmlFor="change">Change Width</label><Field id="change" $w={ 28 } defaultValue="0.08" />
        <Stepper $w={ 20 } $gap={ 2 } aria-label="Widen"><Icon size={ 16 } color={ G }><circle cx="10" cy="10" r="9" /><path d="M10 5v10M5 10h10" /></Icon></Stepper>
        <Stepper $w={ 20 } $gap={ 5 } aria-label="Narrow"><Icon size={ 16 } color={ G }><circle cx="10" cy="10" r="9" /><path d="M5 10h10" /></Icon></Stepper>
      </FormRow>
      <Rule />
      <FormRow $off>
        <label htmlFor="taper">Tapering</label><Field id="taper" $w={ 75 } defaultValue="0.0 in" disabled />
      </FormRow>
      <FormRow>
        <label htmlFor="changeTaper">Change Taper</label><Field id="changeTaper" $w={ 28 } defaultValue="0.02" />
        <Stepper $w={ 20 } $gap={ 2 } aria-label="Taper more"><Taper d="M14 12v3M12 13.500h4" /></Stepper>
        <Stepper $w={ 20 } $gap={ 5 } aria-label="Taper less"><Taper d="M12 13.500h4" /></Stepper>
      </FormRow>
      <Rule />
      <IconRow>
        <Svg $w={ 7 } $h={ 18 } viewBox="0 0 7 18"><path d="M0 1h7v16l-5-1 2-3H0z" fill="#777" /></Svg>
        <Icon color="#777"><path d="M2 8l7-6v4h5q5 1 4 6-1 5-6 5H8v-3h5q2-1 2-3-1-2-6-2v4z" fill="#777" stroke="none" /></Icon>
        <Icon color={ G }><path d="M2 7v11l6-5.500z" /><path d="M18 7v11l-6-5.500z" fill="#777" /><path d="M10 6v13" strokeDasharray="2 2" /><path d="M3 4q7-5 13 1M16 1v5h-4" /></Icon>
        <Icon color="#777" sw={ 1.3 }><path d="M1 6q3-5 6-1t6 1 6-1M1 12q3-4 6-1t6 0 6-1M1 17h18" /></Icon>
        <Icon color={ G }><path d="M1 9q5-3 9 0t9 2M4 7l2 3M9 12l2-4M14 13l1-4" /></Icon>
        <Icon sw={ 3 } color="#222"><rect x="2" y="4" width="16" height="12" /></Icon>
        <Icon color="#777" sw={ 1.3 }><path d="M2 5h16M7 4V2h6v2M4 5l1 14h10l1-14M8 8v8M10 8v8M12 8v8" /></Icon>
      </IconRow>
    </PanelBody>
    <Foot />
  </Panel>
);

const Zoomer = ({ plus }) => (
  <Icon size={ 17 } box={ 16 } sw={ 1.5 }><circle cx="7" cy="7" r="5.500" /><path d={ plus ? 'M11 11l4.500 4.500M4 7h6M7 4v6' : 'M11 11l4.500 4.500M4 7h6' } /></Icon>
);

const NavigatorPanel = () => (
  <Panel $end={ 4 }>
    <PanelTabs $end={ 28 }>
      <PanelClose aria-label="Close panel"><Close /></PanelClose><PanelGrip />
      <PanelTab $w={ 91 } $pad={ 15 }>Navigator<Close /></PanelTab>
      <Spacer />
      <NextTab aria-label="Next tab"><Arrow size={ 8 } /></NextTab>
    </PanelTabs>
    <PanelBody $pad="10px 4px 0 4px" $gap={ 6 }>
      <Preview>
        <Svg $w={ 190 } $h={ 239 } viewBox="0 0 190 239">
          <rect x="15" y="8" width="160" height="223" fill="#fff" />
          <g transform="translate(15 8) scale(.29)" fontFamily="Liberation Serif" fontSize="18" fontWeight="700" fill="#000">
            { lines.map((text, i) => <text key={ text } x="36" y={ 148 + i * 37 }>{ text }</text>) }
          </g>
          <path d="M0 25.500h190M0 202h190" stroke="#e0605f" strokeWidth="2" />
          <path d="M95 12v13M95 202v13" stroke="#444" strokeWidth="1.500" />
          <circle cx="95" cy="9.500" r="4" fill="#cfe4fb" stroke="#16324f" strokeWidth="1.300" />
          <circle cx="95" cy="218" r="4" fill="#cfe4fb" stroke="#16324f" strokeWidth="1.300" />
        </Svg>
      </Preview>
      <Rule />
      <ZoomRow><Zoomer /><ZoomRange aria-label="Zoom" defaultValue={ 24 } /><Zoomer plus /></ZoomRow>
      <NavFooter>
        <SquareButton $on $w={ 22 } $h={ 22 } $gap={ 5 } aria-label="Magnifier"><Icon><circle cx="8" cy="8" r="6" fill="#7da3cc" strokeWidth="1.500" /><path d="M12 12l6 6" strokeWidth="2.500" /></Icon></SquareButton>
        <SquareButton $on $w={ 22 } $h={ 22 } $gap={ 5 } aria-label="Rotate view"><Icon><rect x="5" y="7" width="8" height="8" fill="#777" /><path d="M3 5q6-5 12 0 5 7-2 12-4 2-7 0" strokeWidth="1.300" stroke="#345" /><path d="M1 2v6h6z" fill={ T } stroke="none" /></Icon></SquareButton>
        <AngleField aria-label="Angle" $w={ 65 } defaultValue="0.0°" />
        <Stepper aria-label="Step angle"><UpDown /></Stepper>
        <SquareButton $flat $w={ 26 } $h={ 20 } $gap={ 2 } aria-label="Reset"><Icon size={ 18 }><circle cx="10" cy="10" r="2" /><path d="M3 10a7 7 0 0 1 13-3M17 10a7 7 0 0 1-13 3M0 9l3 3 3-3M14 11l3-3 3 3" strokeWidth="1.600" /></Icon></SquareButton>
        <PageNumber>1</PageNumber>
      </NavFooter>
    </PanelBody>
  </Panel>
);

const layerThumb = (
  <Svg $w={ 20 } viewBox="0 0 20 20">
    <rect width="20" height="20" fill="#fafafa" />
    <path d="M0 0h5v5H0zM10 0h5v5h-5zM5 5h5v5H5zM15 5h5v5h-5zM0 10h5v5H0zM10 10h5v5h-5zM5 15h5v5H5zM15 15h5v5h-5z" fill="#d8d8d8" />
    <path d="M1 6.500h18M1 9.500h18M2 12.500h15" stroke="#aaa" strokeDasharray="2 1" />
  </Svg>
);

const RightDock = () => (
  <Dock>
    <PanelTabs $end={ 8 }>
      <PanelClose aria-label="Close panel"><Close /></PanelClose><PanelGrip />
      <PanelTab $w={ 72 } $pad={ 15 }>Layers<Close /></PanelTab>
      <Spacer />
      <ListIcon />
    </PanelTabs>
    <LayerList>
      <LayerRow>
        <Swatch $w={ 17 } $h={ 19 } $fill="#000" $gap={ 7 } aria-label="Layer colour" />
        <Arrow size={ 12 } color="#444" />
        <LayerName>{ layerThumb }Layer 1</LayerName>
      </LayerRow>
    </LayerList>
    <Rule />
    <Search>
      <Icon size={ 16 } box={ 16 } sw={ 1.5 }><circle cx="10" cy="6" r="4.500" /><path d="M7 9.500l-5.500 5" strokeWidth="2" /></Icon>
      <input aria-label="Search layers" />
    </Search>
    <LayerActions>
      <Icon color={ G } sw={ 1.5 } size={ 12 } box={ 14 }><path d="M0 3h12M9 0v6M0 10h14" /><circle cx="6" cy="10" r="2.500" fill="#bfbfbf" /></Icon>
      <Icon color={ G } sw={ 1.5 }><rect x="7" y="2" width="11" height="11" /><rect x="2" y="6" width="11" height="11" fill="#bfbfbf" /></Icon>
      <Icon color="#ccc" sw={ 1.5 }><circle cx="10" cy="10" r="8" fill="#777" stroke="none" /><rect x="6" y="6" width="5" height="5" /><rect x="10" y="10" width="4" height="4" /></Icon>
      <Icon color={ G }><rect x="3" y="3" width="14" height="14" /><path d="M2 2h2v2H2zM16 2h2v2h-2zM2 16h2v2H2zM16 16h2v2h-2z" /><path d="M7 9h5v5H7zM9 7h5v5H9z" /></Icon>
      <Icon color={ G } sw={ 1.3 }><path d="M6 3h11v11H6z" /><path d="M3 6h11v11H3z" /><path d="M2 2h2M18 18v-2M16 2h2M2 18v-2" /></Icon>
    </LayerActions>
    <Divider />
    <PanelTabs>
      <PanelClose aria-label="Close panel"><Close /></PanelClose><ColorGrip /><HiddenTab>C</HiddenTab>
      <PanelTab $w={ 68 }><UpDown size={ 12 } />Color<Close /></PanelTab>
    </PanelTabs>
    <ColorMixer>
      <Svg $w={ 46 } $h={ 70 } viewBox="0 0 46 70">
        <path d="M4 12Q3 5 11 4" stroke="#333" strokeWidth="1.500" /><path d="M9 1v6l4-3zM1 9h6l-3 4z" fill="#333" />
        <rect x="16" y="0" width="30" height="29" fill="#fff" /><rect x="24" y="8" width="14" height="14" fill="#c4c4c4" />
        <path d="M38 8l7-7" stroke="#e03030" strokeWidth="1.300" />
        <rect x="1" y="17" width="28" height="28" fill="#000" stroke="#eee" />
        <circle cx="8" cy="58" r="6" stroke="#777" /><circle cx="8" cy="58" r="3" fill="#444" />
        <rect x="21" y="49" width="18" height="18" fill="#2c2c2c" stroke="#eee" />
      </Svg>
      <Channels>
        <Channel><span>R</span><Range $tint="#f00" defaultValue={ 0 } /></Channel>
        <Channel><span>G</span><Range $tint="#0f0" defaultValue={ 0 } /></Channel>
        <Channel><span>B</span><Range $tint="#00f" defaultValue={ 0 } /></Channel>
      </Channels>
    </ColorMixer>
    <SwatchRow>
      <Svg $w={ 50 } $h={ 20 } viewBox="0 0 50 20">
        <circle cx="10" cy="10" r="9" fill="#a8a8a8" stroke="#555" /><path d="M4 16l7-8" stroke="#444" strokeWidth="2" /><path d="M10 7l4 4M12 9l3-4" stroke="#222" strokeWidth="3" />
        <circle cx="32" cy="10" r="9" stroke="#fff" />
      </Svg>
      <Swatch $w={ 24 } $h={ 19 } $gap={ 1 } $border="1px solid #ddd" $fill="#fff" aria-label="None"><Svg $w={ 22 } $h={ 17 } viewBox="0 0 22 17"><path d="M0 17L22 0" stroke="#e04040" strokeWidth="1.300" /></Svg></Swatch>
      <Swatch $w={ 24 } $h={ 19 } $gap={ 1 } $border="1px solid #777" $fill="#000" aria-label="Black" />
      <Swatch $w={ 24 } $h={ 19 } $border="1px solid #777" $fill="#fff" aria-label="White" />
    </SwatchRow>
    <Wheel>
      <WheelHole><Shade /></WheelHole>
      <Marker $x={ 127 } $y={ 67 } />
      <Marker $x={ 32 } $y={ 101 } $light />
    </Wheel>
    <OpacityRow>
      <label htmlFor="opacity">Opacity</label>
      <Range id="opacity" defaultValue={ 100 } />
      <OpacityField aria-label="Opacity value" $w={ 56 } defaultValue="100.0%" />
    </OpacityRow>
  </Dock>
);

const City = () => (
  <Svg $w={ 79 } $h={ 38 } viewBox="0 0 79 38">
    <path d="M0 38Q2 22 24 20q26-12 55-6v24z" fill="#e8c58e" />
    <path d="M0 38q3-15 24-15 18 2 14 15z" fill="#27b6c9" />
    <path d="M20 22q12 3 24 2t35-8v22H50q4-8-8-10t-22-6z" fill="#3f9b51" />
    <path d="M38 38q22-4 26-14l-20 2z" fill="#2ea4d8" /><path d="M62 38q2-10 17-14v14z" fill="#63b94a" />
    <path d="M27 8h6v11h-6zM49 12h7v13h-7z" fill="#9aa7c4" /><path d="M59 8h5v11h-5zM66 6h5v12h-5z" fill="#c98468" /><path d="M72 9h5v10h-5z" fill="#6b8fb8" />
    <path d="M10 9a4 4 0 0 1 7-6q5 1 6 6zM4 17a3 3 0 0 1 6-2q4 0 4 2z" fill="#e9c1c8" />
    <path d="M39 0l2 3 3 1-3 1-2 4-1-4-4-1 4-1z" fill="#c46be8" /><circle cx="19" cy="14" r="2" fill="#f0a92e" />
    <circle cx="44" cy="22" r="5" fill="#4fae5c" /><circle cx="61" cy="21" r="4" fill="#2e8a4a" />
  </Svg>
);

const menus = ['File', 'Edit', 'Select', 'Canvas', 'Object', 'Styles', 'Text', 'Effects', 'View', 'Panels', 'Help'];

const App = () => (
  <Page>
    <GlobalStyle />
    <Window>
      <MenuBar>
        <Logo />
        <Menus>{ menus.map(name => <MenuButton key={ name }>{ name }</MenuButton>) }</Menus>
        <WindowButtons>
          <button aria-label="Minimize"><Icon size={ 16 } box={ 16 }><path d="M3 12.500h11" /></Icon></button>
          <button aria-label="Maximize"><Icon size={ 16 } box={ 16 }><rect x="3.500" y="3.500" width="10" height="10" /></Icon></button>
          <button aria-label="Close"><Icon size={ 16 } box={ 16 } sw={ 1.3 }><path d="M3 3l10 10M13 3L3 13" /></Icon></button>
        </WindowButtons>
      </MenuBar>

      <Toolbar>
        { toolbarGroups.map((group, g) => (
          <ToolGroup key={ g }>
            { group.map((icon, i) => (
              <ToolbarButton key={ i } aria-label={ `Tool ${g + 1}.${i + 1}` } $on={ (g === 7 && i === 0) || (g === 8 && i > 1) }>
                <Icon>{ icon }</Icon>
              </ToolbarButton>
            )) }
          </ToolGroup>
        )) }
      </Toolbar>

      <ContextBar>
        No Selection<Tick $space={ 12 } />
        <ModeSpacer $w={ 6 } />
        <ModeButton $on aria-label="Select"><Icon><path d="M6 2v14l3.500-3 2.500 5 2-1-2.500-5H16z" fill="#2b2b2b" stroke="none" /></Icon></ModeButton>
        <ModeButton aria-label="Marquee"><Icon><path d="M10 14H3V2h13v8" strokeWidth="1.300" stroke="#555" /><path d="M9 8v10l3-2 2 4 2-1-2-4h3z" fill="#2b2b2b" stroke="none" /></Icon></ModeButton>
        <ModeButton aria-label="Lasso"><Icon><path d="M3 8q1-6 8-6t7 5q1 6-5 7z" fill="#808080" /><circle cx="6" cy="13" r="4.500" fill="#888" /><path d="M10 8v10l3-2 2 4 2-1-2-4h3z" fill="#2b2b2b" stroke="none" /></Icon></ModeButton>
        <ModeButton aria-label="Transform"><Icon><rect x="4" y="4" width="11" height="11" fill="#808080" stroke="#666" /><path d="M2 2h2v2H2zM15 2h2v2h-2zM2 15h2v2H2z" stroke="#666" /><path d="M11 10l8 5-4 1-1 4z" fill="#2b2b2b" stroke="none" /></Icon></ModeButton>
        <ModeSpacer $w={ 15 } />
        <ModeButton $raised aria-label="Align"><Icon color="#555" sw={ 1.2 }><rect x="3" y="3" width="14" height="14" /><circle cx="10" cy="10" r="3.500" /><path d="M10 1v18M1 10h18" /></Icon></ModeButton>
        <ModeButton $raised aria-label="Anchor"><Icon color="#555" sw={ 1.3 }><rect x="1" y="14" width="18" height="5" /><path d="M10 13V7M5 4q5-5 10 0" /><circle cx="10" cy="5" r="1.500" /></Icon></ModeButton>
        <Tick $space={ 1 } />
        <NudgeIcon><Icon size={ 16 } color="#555" sw={ 1.5 }><rect x="6.500" y="6.500" width="7" height="7" rx="2" /><path d="M10 0l3 4H7zM10 20l3-4H7zM0 10l4-3v6zM20 10l-4-3v6z" fill="#555" stroke="none" /></Icon></NudgeIcon>
        <Field aria-label="Nudge distance" $w={ 50 } defaultValue="10.0 in" />
        <Stepper $dark $w={ 15 } aria-label="Step distance"><Svg $w={ 8 } $h={ 16 } viewBox="0 0 8 16"><path d="M4 0l3 5h-6zM4 16l3-5h-6z" fill="#222" /></Svg></Stepper>
        <PushButtons>
          <PushButton $w={ 80 }>Document</PushButton>
          <PushButton $w={ 80 }>Styles</PushButton>
          <PushButton $w={ 120 }>Artboard Options</PushButton>
          <PushButton $w={ 100 }>Layer Options</PushButton>
        </PushButtons>
        <Tick $space={ 1 } />
      </ContextBar>

      <StrokeBar>
        <Grip>
          <Close />
          <Svg $w={ 14 } $h={ 6 } viewBox="0 0 14 6"><path d="M0 1h14M0 5h14" stroke="#777" strokeWidth="1.500" /></Svg>
          <Svg $w={ 12 } $h={ 10 } viewBox="0 0 12 10"><path d="M4.500 1l-4 4 4 4M7.500 1l4 4-4 4" stroke="#333" /></Svg>
          <Svg $w={ 12 } $h={ 12 } viewBox="0 0 12 12"><rect x=".5" y=".5" width="11" height="11" rx="2" stroke="#444" /><path d="M3.500 3v6M6 3v6M8.500 3v6" stroke="#444" /></Svg>
        </Grip>
        <StrokeFields>
          <StrokeRow>
            <StrokeLabel htmlFor="width">Width</StrokeLabel>
            <Field id="width" $w={ 68 } defaultValue="0.014 in" />
            <Stepper aria-label="Step width"><UpDown /></Stepper>
            <Stepper $w={ 16 } $gap={ 1 } aria-label="Width presets"><Down /></Stepper>
          </StrokeRow>
          <StrokeRow>
            <CornerLabel>Corner</CornerLabel>
            <SquareButton $on $w={ 25 } $h={ 21 } aria-label="Miter"><Icon size={ 16 } box={ 16 }><path d="M1 1h14v14H9V9H1z" fill={ D } stroke="none" /><path d="M1 5h8M11 7v8" stroke="#99c8ff" /><rect x="9" y="4" width="3" height="3" stroke="#99c8ff" /></Icon></SquareButton>
            <SquareButton $flat $w={ 30 } $h={ 21 } $gap={ 2 } aria-label="Round"><Icon size={ 16 } box={ 16 }><path d="M1 1h8q6 0 6 6v8H9V9H1z" fill={ D } stroke="none" /><path d="M1 5h8M11 7v8" stroke="#bfbfbf" /><rect x="9" y="4" width="3" height="3" stroke="#bfbfbf" /></Icon></SquareButton>
            <SquareButton $flat $w={ 30 } $h={ 21 } aria-label="Bevel"><Icon size={ 16 } box={ 16 }><path d="M1 1h8l6 6v8H7V9H1z" fill={ D } stroke="none" /><path d="M1 6h7v9" stroke="#777" /></Icon></SquareButton>
          </StrokeRow>
        </StrokeFields>
        <StrokeColumn>
          <Combo width={ 80 } pad={ 28 } label="Start cap"><Svg $w={ 24 } $h={ 16 } viewBox="0 0 24 16"><path d="M2 0h22v16H2z" fill="#777" /><path d="M2 8h22" stroke="#444" strokeWidth="1.500" /><path d="M0 6h4v4H0z" fill="#222" /></Svg></Combo>
          <Combo width={ 80 } pad={ 10 } label="End cap"><Svg $w={ 24 } $h={ 16 } viewBox="0 0 24 16"><path d="M0 0h21v16H0z" fill="#777" /><path d="M0 8h20" stroke="#444" strokeWidth="1.500" /><path d="M19 6h4v4h-4z" fill="#222" /></Svg></Combo>
        </StrokeColumn>
        <StrokeColumn>
          <Combo width={ 80 } pad={ 26 } label="Start arrow"><Bar $w={ 28 } $h={ 2 } /></Combo>
          <Combo width={ 80 } pad={ 7 } label="End arrow"><Bar $w={ 28 } $h={ 2 } /></Combo>
        </StrokeColumn>
        <StrokeColumn>
          <StrokeRow><Combo width={ 160 } pad={ 15 } label="Dash"><Bar $w={ 111 } $h={ 3 } /></Combo><SquareButton $gap={ 4 } aria-label="Dash settings"><Sliders /></SquareButton></StrokeRow>
          <StrokeRow><Combo width={ 160 } pad={ 13 } label="Width profile"><Bar $w={ 117 } $h={ 16 } /></Combo><SquareButton $gap={ 4 } aria-label="Profile settings"><Sliders /></SquareButton></StrokeRow>
        </StrokeColumn>
      </StrokeBar>

      <Workspace>
        <Toolbox>
          <ToolboxClose aria-label="Close toolbox"><Close /></ToolboxClose>
          { toolGroups.map((group, g) => (
            <ToolGrid key={ g } $last={ g === toolGroups.length - 1 }>
              { group.map((tool, i) => (
                <ToolCell key={ i } $on={ tool.on } $held={ tool.held } aria-label={ `Drawing tool ${g + 1}.${i + 1}` }>
                  <Icon size={ 26 } box={ 26 } color={ T }>{ tool.icon }</Icon>
                </ToolCell>
              )) }
            </ToolGrid>
          )) }
        </Toolbox>

        <DocumentArea>
          <DocumentTabs>
            <DocumentTab><Close />5x7 [RGB] [@115.1%] - [Modified]</DocumentTab>
          </DocumentTabs>
          <DocumentBody>
            <DocumentMain>
              <RulerRow>
                <Svg $w={ 22 } viewBox="0 0 22 20"><path d="M14 0v20M3 12h19" stroke="#333" strokeDasharray="2 2" strokeWidth="1.500" /></Svg>
                <RulerX />
              </RulerRow>
              <DocumentBody>
                <RulerY />
                <PanelColumn>
                  <StrokeWidthPanel />
                  <NavigatorPanel />
                </PanelColumn>
                <CanvasColumn>
                  <Canvas>
                    <Artboard>{ lines.map(text => <Line key={ text }>{ text }</Line>) }</Artboard>
                  </Canvas>
                  <StatusBar>
                    <Chevron size={ 12 } /><StatusButton aria-label="Play"><Arrow size={ 12 } /></StatusButton>
                    <StatusButton aria-label="Last"><Icon size={ 12 } box={ 12 }><path d="M1 1l7 5-7 5z" fill="#222" stroke="none" /><path d="M10 1v10" strokeWidth="2" /></Icon></StatusButton>
                    <StatusCombo><StatusSelect aria-label="Selection"><option>No Selection</option></StatusSelect><Chevron size={ 12 } /></StatusCombo>
                    <StatusButton aria-label="Dock"><Icon size={ 14 } box={ 14 } color="#fff"><rect width="14" height="14" rx="2" fill="#000" stroke="none" /><path d="M3 3h8M7 4v7M4 8l3 3 3-3" strokeWidth="1.500" /></Icon></StatusButton>
                    <StatusButton aria-label="Scroll left"><Icon size={ 14 } box={ 14 } sw={ 2 } color="#222"><path d="M9 1L3 7l6 6" /></Icon></StatusButton>
                    <HorizontalThumb />
                    <StatusButton aria-label="Scroll right"><Icon size={ 14 } box={ 14 } sw={ 2 } color="#222"><path d="M4 1l6 6-6 6" /></Icon></StatusButton>
                  </StatusBar>
                </CanvasColumn>
              </DocumentBody>
            </DocumentMain>
            <ScrollColumn>
              <Icon size={ 16 } box={ 16 } sw={ 2 } color="#222"><path d="M2 11l6-6 6 6" /></Icon>
              <VerticalTrack><VerticalThumb /></VerticalTrack>
              <Chevron />
              <Icon size={ 16 } box={ 16 } color="#444"><rect x="2" y="2" width="12" height="12" /><path d="M8 0v6M8 10v6M0 8h6M10 8h6" /></Icon>
            </ScrollColumn>
          </DocumentBody>
        </DocumentArea>

        <RightDock />
        <SideStrip>
          <Svg $w={ 16 } $h={ 8 } viewBox="0 0 16 8"><path d="M1 1.500h15M1 5.500h15" stroke="#444" strokeWidth="2" strokeDasharray="2 2" /></Svg>
          <Svg $w={ 18 } viewBox="0 0 18 18"><path d="M3 1h12q2 0 2 2v8q0 2-2 2H9l-4 4v-4H3q-2 0-2-2V3q0-2 2-2z" fill="#333" /><path d="M4 5h10M4 9h7" stroke="#ccc" strokeWidth="1.500" /></Svg>
        </SideStrip>

        <Popup>
          { popupRows.map((row, i) => row === 'rule' ? <PopupRule key={ i } /> : (
            <PopupItem key={ i } $shown={ !!row.label }>
              <PopupMark>{ row.checked && <Icon size={ 18 } sw={ 3 } color="#000"><path d="M2 11l5 5L18 4" /></Icon> }</PopupMark>
              <PopupLabel>{ row.label }</PopupLabel>
              { row.sub && <Arrow color="#4a4a4a" size={ 9 } /> }
            </PopupItem>
          )) }
          <Tooltip role="tooltip">Small Box Size</Tooltip>
        </Popup>
      </Workspace>
    </Window>

    <Taskbar>
      <Start aria-label="Start"><Svg $w={ 16 } viewBox="0 0 16 16"><path d="M0 2l7-1v6.500H0zM8 1l8-1v7.500H8zM0 8.500h7V15l-7-1zM8 8.500h8V16l-8-1z" fill="#fff" /></Svg></Start>
      <SearchBox>
        <Svg $w={ 18 } viewBox="0 0 18 18"><circle cx="11" cy="6.500" r="5.500" stroke="#222" strokeWidth="1.400" /><path d="M7 10.500L1 17" stroke="#222" strokeWidth="1.400" /></Svg>
        <input aria-label="Search" placeholder="Type here to search" />
        <City />
      </SearchBox>
      <Apps>
        { apps.map(app => (
          <AppButton key={ app.name } $wide={ app.wide } $open={ app.open } $active={ app.active } aria-label={ app.name }>
            { app.logo && <Logo size={ 24 } /> }
            { app.tile && <Tile>{ app.tile }</Tile> }
            { app.icon && <Svg $w={ 24 } viewBox="0 0 24 24">{ app.icon }</Svg> }
          </AppButton>
        )) }
      </Apps>
      <Tray>
        { trayIcons.map((icon, i) => <Icon key={ i } color="#fff" sw={ 1.3 }>{ icon }</Icon>) }
        <Clock>12:24 PM<br />8/1/2022</Clock>
        <Icon color="#fff"><path d="M2 2h16v11h-3v4l-4-4H2z" fill="#fff" /><path d="M5 5.500h10M5 8h10M5 10.500h7" stroke="#1a2643" /></Icon>
        <ShowDesktop />
      </Tray>
    </Taskbar>
  </Page>
);

export default App;
